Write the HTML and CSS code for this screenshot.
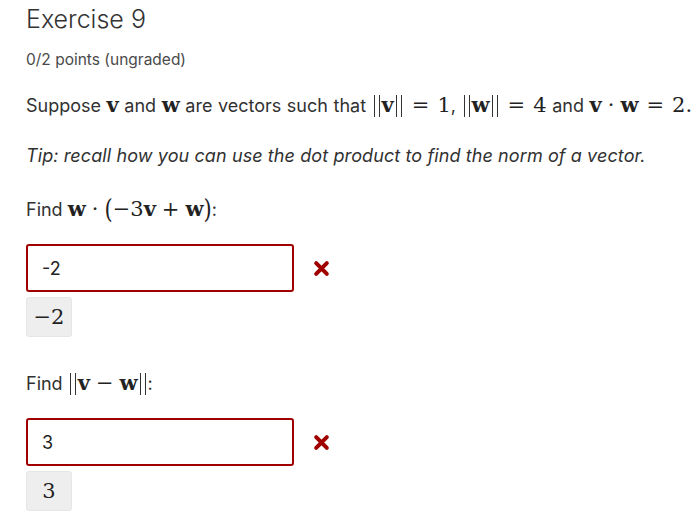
FILE: index.html
```html
<!DOCTYPE html>
<html>
<head>
<meta charset="utf-8">
<link rel="stylesheet" href="styles.css">
</head>
<body>
<main class="page">
  <h1 class="title">Exercise 9</h1>
  <div class="points">0/2 points (ungraded)</div>
  <p class="para">Suppose <span class="m b">v</span> and <span class="m b">w</span> are vectors such that <span class="m"><span class="nrm"></span><span class="b">v</span><span class="nrm"></span><span class="rel">=</span>1</span>, <span class="m"><span class="nrm"></span><span class="b">w</span><span class="nrm"></span><span class="rel">=</span>4</span> and <span class="m"><span class="b">v</span><span class="bin">·</span><span class="b">w</span><span class="rel">=</span>2.</span></p>
  <p class="tip">Tip: recall how you can use the dot product to find the norm of a vector.</p>

  <section class="q">
    <p class="prompt">Find <span class="m"><span class="b">w</span><span class="bin">·</span><span class="paren">(</span>−3<span class="b">v</span><span class="bin">+</span><span class="b">w</span><span class="paren">)</span></span>:</p>
    <div class="answer-row">
      <div class="input">-2</div>
      <svg class="xmark" width="17" height="17" viewBox="0 0 16 16"><path d="M3 3 L13 13 M13 3 L3 13" stroke="#a00000" stroke-width="3.8" stroke-linecap="round"/></svg>
    </div>
    <div class="preview"><span class="m">−2</span></div>
  </section>

  <section class="q q2">
    <p class="prompt">Find <span class="m"><span class="nrm"></span><span class="b">v</span><span class="bin">−</span><span class="b">w</span><span class="nrm"></span></span>:</p>
    <div class="answer-row">
      <div class="input">3</div>
      <svg class="xmark" width="17" height="17" viewBox="0 0 16 16"><path d="M3 3 L13 13 M13 3 L3 13" stroke="#a00000" stroke-width="3.8" stroke-linecap="round"/></svg>
    </div>
    <div class="preview"><span class="m">3</span></div>
  </section>
</main>
</body>
</html>
```

FILE: styles.css
```css
html, body {
  margin: 0;
  padding: 0;
  background: #fff;
}
.page {
  padding: 0 0 0 26px;
  font-family: "Inter", "Open Sans", sans-serif;
  color: #313131;
}
.title {
  margin: 0;
  padding-top: 2px;
  font-size: 25px;
  font-weight: 300;
  line-height: 34px;
  color: #333;
}
.points {
  margin-top: 13px;
  font-size: 15.5px;
  line-height: 22px;
  color: #4a4a4a;
}
.para {
  margin: 22px 0 0;
  font-size: 18px;
  line-height: 26px;
  word-spacing: 0.5px;
  white-space: nowrap;
}
.tip {
  margin: 24px 0 0;
  font-size: 18px;
  line-height: 26px;
  letter-spacing: 0.1px;
  font-style: italic;
}
.m {
  font-family: "DejaVu Serif", "Liberation Serif", serif;
  font-size: 21px;
  font-style: normal;
  line-height: 1;
  word-spacing: 0;
  color: #222;
}
.b {
  font-weight: 700;
}
.rel {
  padding: 0 8px;
}
.bin {
  padding: 0 6px;
}
.paren {
  display: inline-block;
  transform: scaleY(1.25);
  font-weight: 300;
}
.nrm {
  display: inline-block;
  box-sizing: border-box;
  width: 6px;
  height: 22px;
  margin: 0 2px;
  border-left: 1px solid #333;
  border-right: 1px solid #333;
  vertical-align: -5px;
}
.q {
  margin-top: 28px;
}
.q2 {
  margin-top: 34px;
}
.prompt {
  margin: 0;
  font-size: 18px;
  line-height: 26px;
}
.answer-row {
  display: flex;
  align-items: center;
  margin-top: 21px;
}
.input {
  box-sizing: border-box;
  width: 268px;
  height: 48px;
  border: 2px solid #a00000;
  border-radius: 3px;
  padding: 0 0 0 14px;
  display: flex;
  align-items: center;
  font-size: 18px;
  color: #222;
}
.xmark {
  margin-left: 19px;
}
.preview {
  display: inline-flex;
  align-items: center;
  justify-content: center;
  box-sizing: border-box;
  margin-top: 5px;
  min-width: 46px;
  height: 40px;
  padding: 0 6px;
  background: #eeeeee;
  border: 1px solid #e6e6e6;
  border-radius: 3px;
}
.preview .m {
  font-size: 21px;
}
```
